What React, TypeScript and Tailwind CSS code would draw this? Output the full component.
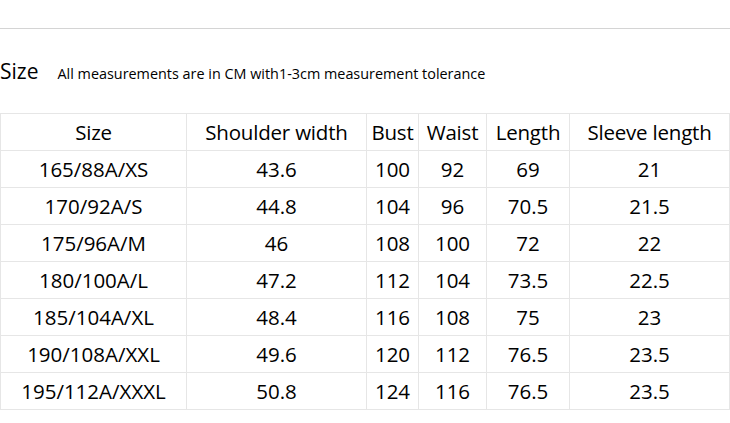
import React from 'react';

const headers = ['Size', 'Shoulder width', 'Bust', 'Waist', 'Length', 'Sleeve length'];

const rows = [
  ['165/88A/XS', '43.6', '100', '92', '69', '21'],
  ['170/92A/S', '44.8', '104', '96', '70.5', '21.5'],
  ['175/96A/M', '46', '108', '100', '72', '22'],
  ['180/100A/L', '47.2', '112', '104', '73.5', '22.5'],
  ['185/104A/XL', '48.4', '116', '108', '75', '23'],
  ['190/108A/XXL', '49.6', '120', '112', '76.5', '23.5'],
  ['195/112A/XXXL', '50.8', '124', '116', '76.5', '23.5'],
];

const colWidths = ['w-[186px]', 'w-[180px]', 'w-[52px]', 'w-[68px]', 'w-[83px]', 'w-[160px]'];

export default function App() {
  return (
    <div className="w-[730px] h-[423px] bg-white text-black overflow-hidden" style={{ fontFamily: '"Open Sans", "Noto Sans", sans-serif' }}>
      <div className="h-[29px] border-b border-[#d4d4d4]" />
      <div className="flex items-baseline h-[84px] pt-[27px]">
        <span className="text-[21px] leading-[30px]">Size</span>
        <span className="ml-[19px] text-[14.4px]">All measurements are in CM with1-3cm measurement tolerance</span>
      </div>
      <table className="border-collapse table-fixed w-[729px] text-[20.5px]">
        <colgroup>
          {colWidths.map((w, i) => (
            <col key={i} className={w} />
          ))}
        </colgroup>
        <thead>
          <tr className="h-[37px]">
            {headers.map((h) => (
              <th key={h} className="border border-[#e6e6e6] font-normal text-center p-0 whitespace-nowrap tracking-[-0.2px]">{h}</th>
            ))}
          </tr>
        </thead>
        <tbody>
          {rows.map((r) => (
            <tr key={r[0]} className="h-[37px]">
              {r.map((c, i) => (
                <td key={i} className="border border-[#e6e6e6] text-center p-0 whitespace-nowrap">{c}</td>
              ))}
            </tr>
          ))}
        </tbody>
      </table>
    </div>
  );
}
